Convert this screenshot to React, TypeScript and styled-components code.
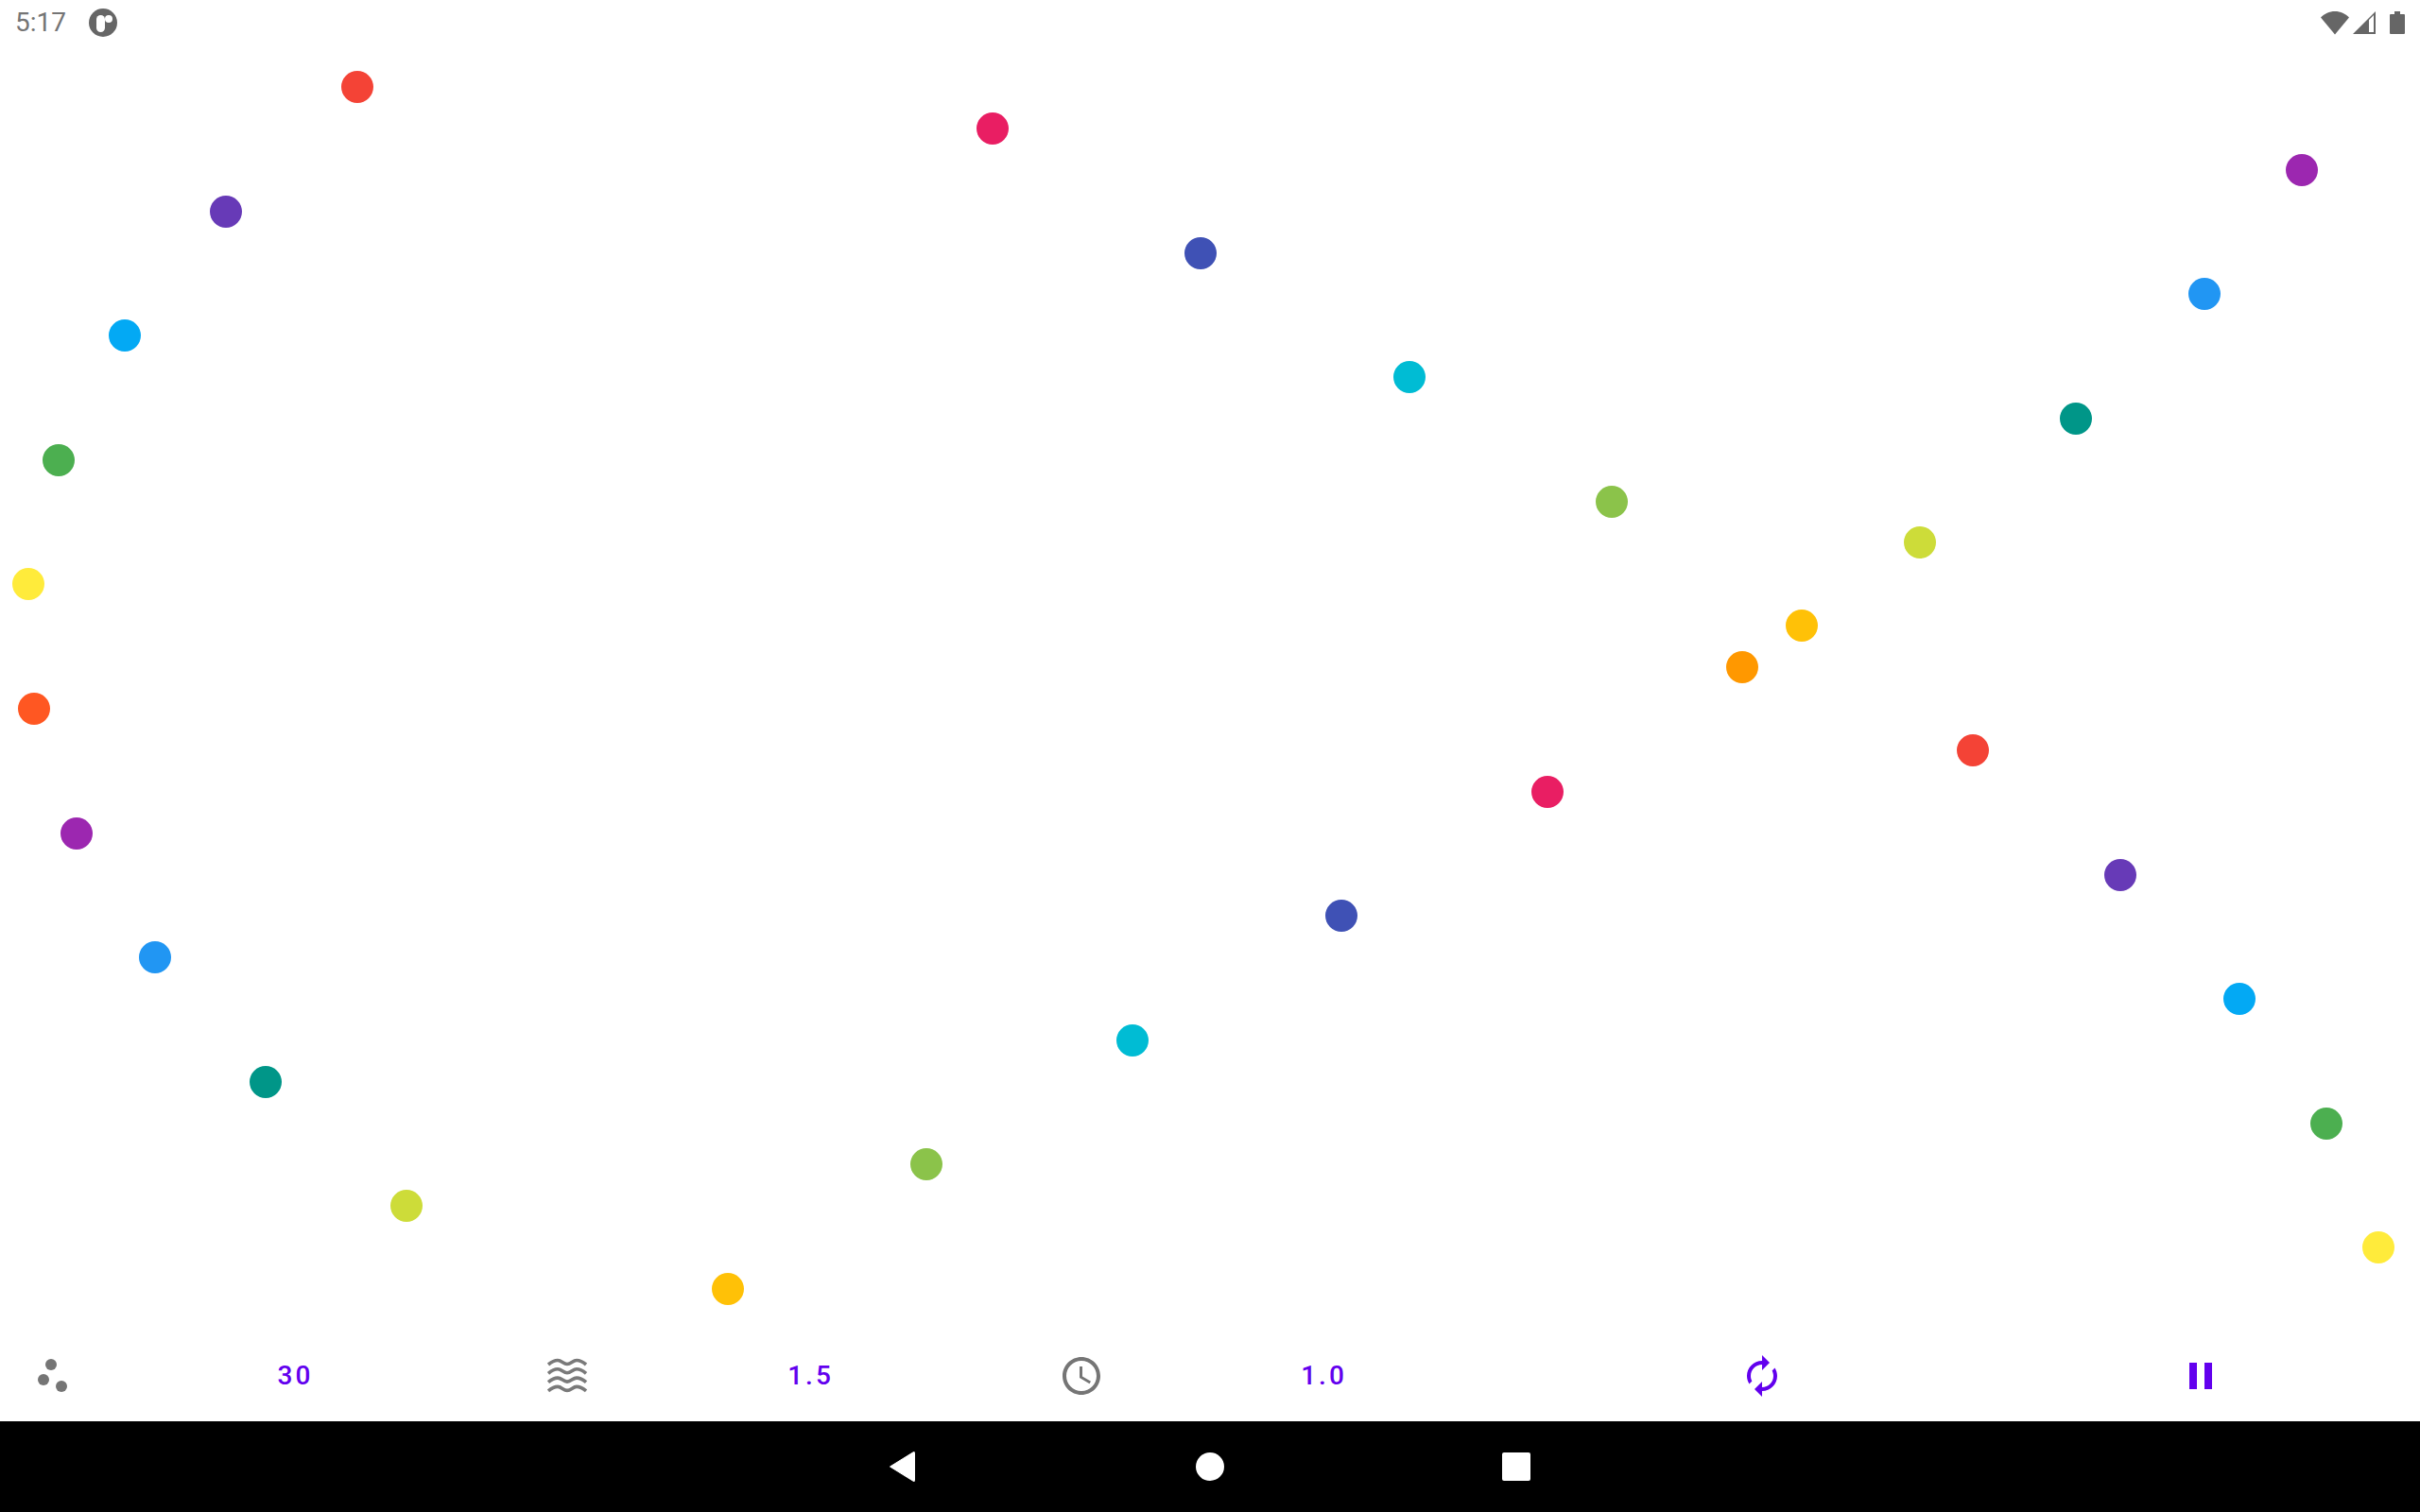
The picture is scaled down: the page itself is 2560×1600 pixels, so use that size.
import React from "react";
import styled, { createGlobalStyle } from "styled-components";

const GlobalStyle = createGlobalStyle`
  html, body { margin: 0; padding: 0; background: #fff; }
  body { font-family: Roboto, "Liberation Sans", sans-serif; }
`;

const Screen = styled.div`
  width: 2560px;
  height: 1600px;
  display: flex;
  flex-direction: column;
  overflow: hidden;
  background: #fff;
`;

const StatusBar = styled.header`
  flex: 0 0 48px;
  height: 48px;
  display: flex;
  align-items: center;
  justify-content: space-between;
  padding: 0 16px 0 16px;
  box-sizing: border-box;
  color: #757575;
`;

const StatusLeft = styled.div`
  display: flex;
  align-items: center;
  gap: 24px;
`;

const Clock = styled.span`
  font-size: 28px;
  line-height: 48px;
  color: #757575;
`;

const StatusRight = styled.div`
  display: flex;
  align-items: center;
  gap: 3px;
`;

const Canvas = styled.main`
  position: relative;
  flex: 1 1 auto;
`;

const Dot = styled.span<{ $color: string; $x: number; $y: number }>`
  position: absolute;
  width: 34px;
  height: 34px;
  border-radius: 50%;
  left: ${(p) => p.$x - 17}px;
  top: ${(p) => p.$y - 17 - 48}px;
  background: ${(p) => p.$color};
`;

const Toolbar = styled.section`
  flex: 0 0 96px;
  height: 96px;
  display: grid;
  grid-template-columns: 110px 404px 172px 342px 232px 280px 648px 280px 92px;
  align-items: center;
  justify-items: center;
`;

const IconSlot = styled.div<{ $color?: string }>`
  width: 48px;
  height: 48px;
  display: flex;
  color: ${(p) => p.$color ?? "#757575"};
  svg { display: block; }
`;

const ValueButton = styled.button`
  border: 0;
  padding: 0 0 0 1px;
  background: none;
  font-family: Roboto, "Liberation Sans", sans-serif;
  font-size: 28px;
  font-weight: 500;
  letter-spacing: 3px;
  line-height: 48px;
  color: #6200ee;
`;

const NavBar = styled.nav`
  flex: 0 0 96px;
  height: 96px;
  background: #000;
  display: grid;
  grid-template-columns: 324px 324px 324px;
  justify-content: center;
  align-items: center;
  justify-items: center;
`;

const NavCircle = styled.span`
  display: block;
  width: 30px;
  height: 30px;
  border-radius: 50%;
  background: #fff;
`;

const NavSquare = styled.span`
  display: block;
  width: 30px;
  height: 30px;
  border-radius: 2px;
  background: #fff;
`;

const DOTS: [number, number, string][] = [
  [378, 92, "#f44336"],
  [239, 224, "#673ab7"],
  [132, 355, "#03a9f4"],
  [62, 487, "#4caf50"],
  [30, 618, "#ffeb3b"],
  [36, 750, "#ff5722"],
  [81, 882, "#9c27b0"],
  [164, 1013, "#2196f3"],
  [281, 1145, "#009688"],
  [430, 1276, "#cddc39"],
  [770, 1364, "#ffc107"],
  [980, 1232, "#8bc34a"],
  [1198, 1101, "#00bcd4"],
  [1419, 969, "#3f51b5"],
  [1637, 838, "#e91e63"],
  [1843, 706, "#ff9800"],
  [1906, 662, "#ffc107"],
  [2031, 574, "#cddc39"],
  [2196, 443, "#009688"],
  [2332, 311, "#2196f3"],
  [2435, 180, "#9c27b0"],
  [1050, 136, "#e91e63"],
  [1270, 268, "#3f51b5"],
  [1491, 399, "#00bcd4"],
  [1705, 531, "#8bc34a"],
  [2087, 794, "#f44336"],
  [2243, 926, "#673ab7"],
  [2369, 1057, "#03a9f4"],
  [2461, 1189, "#4caf50"],
  [2516, 1320, "#ffeb3b"],
];

const AppBadge = () => (
  <svg width="30" height="30" viewBox="0 0 30 30">
    <circle cx="15" cy="15" r="15" fill="#666" />
    <rect x="8" y="7" width="9" height="18" rx="4.5" fill="#fff" />
    <circle cx="21" cy="11" r="4" fill="#fff" />
  </svg>
);

const WifiIcon = () => (
  <svg width="30" height="26" viewBox="0 0 30 26">
    <path d="M15 25.500 0 7.500C4 3.500 9 1 15 1s11 2.500 15 6.500z" fill="#666" />
  </svg>
);

const SignalIcon = () => (
  <svg width="26" height="26" viewBox="0 0 26 26">
    <path d="M1 25 25 1v24zM18 10v13h5V5z" fill="#666" fillRule="evenodd" />
  </svg>
);

const BatteryIcon = () => (
  <svg width="16" height="26" viewBox="0 0 16 26" style={{ marginLeft: 11 }}>
    <path d="M5 1h6v3h4a1 1 0 0 1 1 1v19a1 1 0 0 1-1 1H1a1 1 0 0 1-1-1V5a1 1 0 0 1 1-1h4z" fill="#666" />
  </svg>
);

const ParticlesIcon = () => (
  <svg width="48" height="48" viewBox="0 0 48 48" fill="currentColor">
    <circle cx="23" cy="12" r="6" />
    <circle cx="15" cy="28" r="6" />
    <circle cx="34" cy="35" r="6" />
  </svg>
);

const WavesIcon = () => (
  <svg width="48" height="48" viewBox="0 0 48 48" fill="none" stroke="#7a7a7a" strokeWidth="3.600">
    {[9.5, 18.8, 28.1, 37.4].map((y) => (
      <path
        key={y}
        d={`M4 ${y + 2.5}C7 ${y} 10 ${y - 2} 14 ${y - 2}S20 ${y + 2} 24 ${y + 2}S30 ${y - 2} 34 ${y - 2}S41 ${y} 44 ${y + 2.5}`}
      />
    ))}
  </svg>
);

const TimeIcon = () => (
  <svg width="48" height="48" viewBox="0 0 24 24" fill="currentColor">
    <path d="M11.990 2C6.470 2 2 6.480 2 12s4.470 10 9.990 10C17.520 22 22 17.520 22 12S17.520 2 11.990 2zM12 20c-4.420 0-8-3.580-8-8s3.580-8 8-8 8 3.580 8 8-3.580 8-8 8zm.5-13H11v6l5.250 3.150.75-1.230-4.500-2.670z" />
  </svg>
);

const RenewIcon = () => (
  <svg width="48" height="48" viewBox="0 0 24 24" fill="currentColor">
    <path d="M12 6v3l4-4-4-4v3c-4.420 0-8 3.580-8 8 0 1.570.46 3.030 1.240 4.260L6.700 14.800c-.45-.83-.7-1.790-.7-2.800 0-3.310 2.690-6 6-6zm6.760 1.740L17.300 9.200c.44.84.7 1.790.7 2.800 0 3.310-2.690 6-6 6v-3l-4 4 4 4v-3c4.420 0 8-3.580 8-8 0-1.570-.46-3.030-1.240-4.260z" />
  </svg>
);

const PauseIcon = () => (
  <svg width="48" height="48" viewBox="0 0 24 24" fill="currentColor">
    <path d="M6 19h4V5H6v14zm8-14v14h4V5h-4z" />
  </svg>
);

const BackIcon = () => (
  <svg width="30" height="34" viewBox="0 0 30 34">
    <path d="M.5 17 25.500 1.500a.8.8 0 0 1 1 .8v29.400a.8.8 0 0 1-1 .8z" fill="#fff" stroke="#fff" strokeLinejoin="round" />
  </svg>
);

export default function App() {
  return (
    <Screen>
      <GlobalStyle />
      <StatusBar>
        <StatusLeft>
          <Clock>5:17</Clock>
          <AppBadge />
        </StatusLeft>
        <StatusRight>
          <WifiIcon />
          <SignalIcon />
          <BatteryIcon />
        </StatusRight>
      </StatusBar>
      <Canvas>
        {DOTS.map(([x, y, color]) => (
          <Dot key={`${x}-${y}`} $x={x} $y={y} $color={color} />
        ))}
      </Canvas>
      <Toolbar>
        <IconSlot><ParticlesIcon /></IconSlot>
        <ValueButton>30</ValueButton>
        <IconSlot><WavesIcon /></IconSlot>
        <ValueButton>1.5</ValueButton>
        <IconSlot><TimeIcon /></IconSlot>
        <ValueButton>1.0</ValueButton>
        <IconSlot $color="#6200ee"><RenewIcon /></IconSlot>
        <IconSlot $color="#6200ee"><PauseIcon /></IconSlot>
      </Toolbar>
      <NavBar>
        <BackIcon />
        <NavCircle />
        <NavSquare />
      </NavBar>
    </Screen>
  );
}
